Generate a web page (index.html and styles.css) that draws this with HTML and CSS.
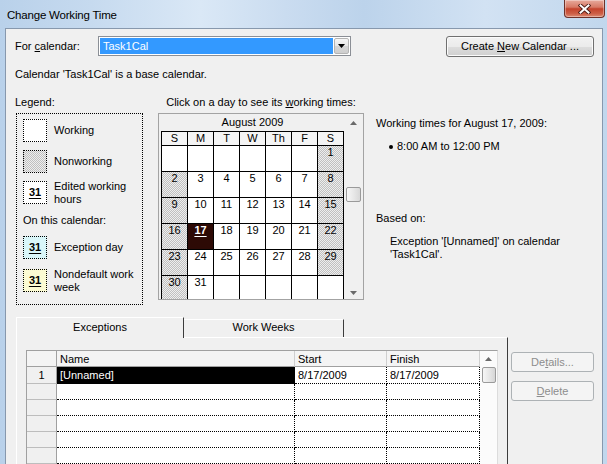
FILE: index.html
```html
<!DOCTYPE html>
<html>
<head>
<meta charset="utf-8">
<title>Change Working Time</title>
<link rel="stylesheet" href="styles.css">
</head>
<body>
<div class="window">
  <div class="titlebar">
    <span class="title">Change Working Time</span>
    <div class="close">
      <svg width="13" height="10" viewBox="0 0 13 10"><path d="M2.5 1.5 L10.5 8.5 M10.5 1.5 L2.5 8.5" stroke="#4a1a14" stroke-width="3.8" stroke-linecap="square"/><path d="M2.5 1.5 L10.5 8.5 M10.5 1.5 L2.5 8.5" stroke="#ffffff" stroke-width="2" stroke-linecap="square"/></svg>
    </div>
  </div>
  <div class="client">
    <div class="row-cal">
      <span class="lbl-for">For <u>c</u>alendar:</span>
      <div class="combo">
        <span class="combo-sel">Task1Cal</span>
        <span class="combo-btn"><svg width="7" height="4" viewBox="0 0 7 4"><polygon points="0,0 7,0 3.5,4" fill="#000"/></svg></span>
      </div>
      <button class="btn btn-new">Create <u>N</u>ew Calendar ...</button>
    </div>
    <p class="base-note">Calendar 'Task1Cal' is a base calendar.</p>

    <div class="main">
      <div class="legend-col">
        <div class="legend-title">Legend:</div>
        <div class="legend-box">
          <div class="lg-item"><span class="sw"></span><span class="lg-text">Working</span></div>
          <div class="lg-item"><span class="sw hatch"></span><span class="lg-text">Nonworking</span></div>
          <div class="lg-item"><span class="sw"><b>31</b></span><span class="lg-text">Edited working<br>hours</span></div>
          <div class="lg-sub">On this calendar:</div>
          <div class="lg-item lg-first"><span class="sw sw-exc"><b>31</b></span><span class="lg-text">Exception day</span></div>
          <div class="lg-item lg-last"><span class="sw sw-week"><b>31</b></span><span class="lg-text">Nondefault work<br>week</span></div>
        </div>
      </div>

      <div class="cal-col">
        <div class="cal-title">Click on a day to see its <u>w</u>orking times:</div>
        <div class="cal-box">
          <div class="cal-area">
            <div class="month">August 2009</div>
            <div class="days">
              <div class="dh">S</div><div class="dh">M</div><div class="dh">T</div><div class="dh">W</div><div class="dh">Th</div><div class="dh">F</div><div class="dh">S</div>
              <div class="d"></div><div class="d"></div><div class="d"></div><div class="d"></div><div class="d"></div><div class="d"></div><div class="d hatch">1</div>
              <div class="d hatch">2</div><div class="d">3</div><div class="d">4</div><div class="d">5</div><div class="d">6</div><div class="d">7</div><div class="d hatch">8</div>
              <div class="d hatch">9</div><div class="d">10</div><div class="d">11</div><div class="d">12</div><div class="d">13</div><div class="d">14</div><div class="d hatch">15</div>
              <div class="d hatch">16</div><div class="d d-sel">17</div><div class="d">18</div><div class="d">19</div><div class="d">20</div><div class="d">21</div><div class="d hatch">22</div>
              <div class="d hatch">23</div><div class="d">24</div><div class="d">25</div><div class="d">26</div><div class="d">27</div><div class="d">28</div><div class="d hatch">29</div>
              <div class="d hatch">30</div><div class="d">31</div><div class="d"></div><div class="d"></div><div class="d"></div><div class="d"></div><div class="d"></div>
            </div>
          </div>
          <div class="vscroll">
            <div class="arr arr-up"><svg width="7" height="4" viewBox="0 0 7 4"><polygon points="0,4 7,4 3.5,0" fill="#6a6a6a"/></svg></div>
            <div class="track"><div class="thumb"></div></div>
            <div class="arr arr-down"><svg width="7" height="4" viewBox="0 0 7 4"><polygon points="0,0 7,0 3.5,4" fill="#6a6a6a"/></svg></div>
          </div>
        </div>
      </div>

      <div class="info-col">
        <div>Working times for August 17, 2009:</div>
        <div class="bullet-line"><span class="dot"></span>8:00 AM to 12:00 PM</div>
        <div class="based">Based on:</div>
        <div class="based-text">Exception '[Unnamed]' on calendar<br>'Task1Cal'.</div>
      </div>
    </div>

    <div class="bottom">
      <div class="tabs-wrap">
        <div class="tabstrip">
          <div class="tab tab-active">Exceptions</div>
          <div class="tab tab-inactive">Work Weeks</div>
        </div>
        <div class="tabpanel">
          <div class="xgrid">
            <div class="hc hc-corner"></div>
            <div class="hc">Name</div>
            <div class="hc">Start</div>
            <div class="hc">Finish</div>
            <div class="gscroll">
              <div class="garr"><svg width="7" height="4" viewBox="0 0 7 4"><polygon points="0,4 7,4 3.5,0" fill="#6a6a6a"/></svg></div>
              <div class="gthumb"></div>
            </div>

            <div class="rh r1">1</div><div class="c r1 c-sel">[Unnamed]</div><div class="c r1">8/17/2009</div><div class="c r1">8/17/2009</div>
            <div class="rh"></div><div class="c"></div><div class="c"></div><div class="c"></div>
            <div class="rh"></div><div class="c"></div><div class="c"></div><div class="c"></div>
            <div class="rh"></div><div class="c"></div><div class="c"></div><div class="c"></div>
            <div class="rh"></div><div class="c"></div><div class="c"></div><div class="c"></div>
            <div class="rh"></div><div class="c"></div><div class="c"></div><div class="c"></div>
            <div class="rh"></div><div class="c"></div><div class="c"></div><div class="c"></div>
          </div>
        </div>
      </div>
      <div class="side-btns">
        <button class="btn btn-dis">De<u>t</u>ails...</button>
        <button class="btn btn-dis btn-del"><u>D</u>elete</button>
      </div>
    </div>
  </div>
</div>
</body>
</html>
```
FILE: styles.css
```css
* { box-sizing: border-box; }
html, body { margin: 0; padding: 0; }
body {
  width: 607px;
  height: 464px;
  overflow: hidden;
  font-family: "Liberation Sans", Arial, sans-serif;
  font-size: 11px;
  line-height: 13px;
  color: #000;
  background: #c6daef;
}
u { text-decoration: underline; text-underline-offset: 1px; }

.window {
  width: 607px;
  height: 464px;
  display: flex;
  flex-direction: column;
  background: linear-gradient(90deg, #b9d1ea 0%, #c6daef 15%, #dae8f6 33%, #cadcf0 47%, #bcd3eb 60%, #d2e2f3 80%, #c1d7ed 100%);
}

.titlebar {
  height: 28px;
  flex: none;
  display: flex;
  align-items: flex-start;
  padding: 0 2px 0 7px;
}
.title {
  margin-top: 8px;
  font-size: 11.5px;
  line-height: 14px;
  letter-spacing: -0.2px;
  color: #000;
}
.close {
  margin-left: auto;
  width: 41px;
  height: 18px;
  border: 1px solid #6e3129;
  border-top: none;
  border-radius: 0 0 4px 4px;
  background: linear-gradient(180deg, #e7aa9c 0%, #d77a66 42%, #c4432c 52%, #cd5f47 80%, #dc8a73 100%);
  box-shadow: inset 0 0 0 1px rgba(255, 255, 255, 0.35);
  display: flex;
  align-items: center;
  justify-content: center;
}

.client {
  flex: 1;
  min-height: 0;
  overflow: hidden;
  margin: 0 4px 0 5px;
  border: 1px solid #8798ad;
  border-bottom: none;
  background: #f0f0f0;
  padding: 7px 8px 0 9px;
  display: flex;
  flex-direction: column;
}

/* top row */
.row-cal {
  display: flex;
  align-items: flex-start;
  height: 20px;
  flex: none;
}
.lbl-for {
  width: 83px;
  line-height: 20px;
}
.combo {
  width: 253px;
  height: 20px;
  border: 1px solid #8b8f96;
  background: #fff;
  padding: 1px;
  display: flex;
}
.combo-sel {
  flex: 1;
  background: #3399ff;
  color: #fff;
  padding-left: 3px;
  line-height: 16px;
}
.combo-btn {
  width: 15px;
  margin-left: 1px;
  border: 1px solid #b4b4b4;
  border-radius: 2px;
  background: linear-gradient(180deg, #f6f6f6 0%, #e6e6e6 50%, #d6d6d6 51%, #cfcfcf 100%);
  display: flex;
  align-items: center;
  justify-content: center;
}
.btn {
  font-family: "Liberation Sans", Arial, sans-serif;
  font-size: 11px;
  line-height: 13px;
  color: #000;
  padding: 0;
  margin: 0;
  border: 1px solid #707070;
  border-radius: 3px;
  background: linear-gradient(180deg, #f2f2f2 0%, #ebebeb 50%, #dddddd 51%, #cfcfcf 100%);
  box-shadow: inset 0 0 0 1px #fbfbfb;
}
.btn-new {
  margin-left: auto;
  width: 148px;
  height: 21px;
}

.base-note {
  margin: 12px 0 0;
  flex: none;
}

/* main */
.main {
  display: flex;
  align-items: flex-start;
  margin-top: 15px;
  flex: none;
}
.legend-col { width: 128px; }
.legend-box {
  margin: 4px 0 0 1px;
  width: 127px;
  height: 192px;
  border: 1px dotted #000;
  padding: 5px 6px 0 6px;
}
.lg-item {
  display: flex;
  align-items: center;
  height: 23px;
}
.lg-item + .lg-item { margin-top: 8px; }
.lg-item.lg-last { margin-top: 10px; }
.lg-text { margin-left: 7px; }
.sw {
  width: 24px;
  height: 23px;
  flex: none;
  border: 1px dotted #000;
  background: #fff;
  display: flex;
  align-items: center;
  justify-content: center;
}
.sw b { text-decoration: underline; text-underline-offset: 2px; }
.sw-exc { background: #d9f6f9; }
.sw-week { background: #fbfbd3; }
.lg-sub { margin: 10px 0 9px; }

.hatch {
  background: repeating-conic-gradient(#c0c0c0 0 25%, #eeeeee 0 50%) 0 0 / 2px 2px;
}

/* calendar */
.cal-col {
  margin-left: 15px;
  width: 206px;
  flex: none;
}
.cal-title { text-align: center; }
.cal-box {
  margin-top: 4px;
  height: 187px;
  border: 1px solid #a3a3a3;
  background: #f0f0f0;
  padding: 0 1px 0 2px;
  display: flex;
  overflow: hidden;
}
.cal-area { width: 183px; flex: none; }
.month {
  height: 17px;
  line-height: 17px;
  text-align: center;
}
.days {
  display: grid;
  grid-template-columns: repeat(7, 25px);
  grid-template-rows: 13px;
  grid-auto-rows: 25px;
  gap: 1px;
  padding: 1px;
  background: #000;
}
.dh {
  background: #f4f4f4;
  text-align: center;
  line-height: 13px;
}
.d {
  background: #fff;
  text-align: center;
  line-height: 13px;
}
.d.hatch {
  background: repeating-conic-gradient(#c0c0c0 0 25%, #eeeeee 0 50%) 0 0 / 2px 2px;
}
.d-sel {
  background: #2d0a05;
  color: #fff;
  font-weight: bold;
  text-decoration: underline;
  text-underline-offset: 2px;
}
.vscroll {
  width: 17px;
  margin-left: 1px;
  flex: none;
  display: flex;
  flex-direction: column;
}
.arr {
  display: flex;
  align-items: center;
  justify-content: center;
  flex: none;
}
.arr-up { height: 17px; }
.arr-down { height: 12px; }
.track { flex: 1; }
.thumb {
  margin: 56px 0 0 1px;
  width: 15px;
  height: 15px;
  border: 1px solid #9a9a9a;
  border-radius: 2px;
  background: linear-gradient(90deg, #f6f6f6 0%, #e8e8e8 50%, #d8d8d8 100%);
}

/* info */
.info-col {
  margin-left: 12px;
  padding-top: 21px;
  flex: 1;
}
.bullet-line {
  margin-top: 10px;
  display: flex;
  align-items: center;
}
.dot {
  width: 4px;
  height: 4px;
  border-radius: 50%;
  background: #000;
  margin: 1px 4px 0 13px;
}
.based { margin-top: 59px; }
.based-text {
  margin-top: 10px;
  padding-left: 14px;
}

/* bottom */
.bottom {
  display: flex;
  align-items: flex-start;
  margin-top: 12px;
  flex: 1;
  min-height: 0;
}
.tabs-wrap {
  margin-left: 1px;
  width: 492px;
  flex: none;
  display: flex;
  flex-direction: column;
  height: 200px;
}
.tabstrip {
  display: flex;
  align-items: flex-start;
  height: 20px;
  flex: none;
}
.tab {
  text-align: center;
  background: #f0f0f0;
  border-top: 1px solid #ffffff;
  border-right: 1px solid #3c3c3c;
}
.tab-active {
  position: relative;
  z-index: 1;
  width: 168px;
  height: 21px;
  border-left: 1px solid #ffffff;
  padding-top: 3px;
}
.tab-inactive {
  width: 160px;
  height: 18px;
  margin-top: 2px;
  padding-top: 1px;
}
.tabpanel {
  flex: 1;
  border-top: 1px solid #ffffff;
  border-left: 1px solid #ffffff;
  border-right: 1px solid #3c3c3c;
  padding: 12px 0 0 9px;
}

.xgrid {
  display: grid;
  grid-template-columns: 30px 238px 92px 93px 17px;
  grid-template-rows: 16px 17px;
  grid-auto-rows: 16px;
  width: 472px;
  border: 1px solid #a0a0a0;
  border-right-color: #dcdcdc;
  border-bottom: none;
  background: #fff;
}
.hc {
  background: #f4f4f4;
  border-right: 1px solid #cfcfcf;
  border-bottom: 1px solid #a0a0a0;
  padding: 1px 0 0 3px;
  line-height: 14px;
}
.hc-corner { border-right: 1px solid #a0a0a0; }
.gscroll {
  grid-column: 5;
  grid-row: 1 / span 8;
  background: #fbfbfb;
  display: flex;
  flex-direction: column;
  align-items: center;
}
.garr {
  height: 16px;
  display: flex;
  align-items: center;
  justify-content: center;
  flex: none;
}
.gthumb {
  width: 14px;
  height: 16px;
  border: 1px solid #9a9a9a;
  border-radius: 2px;
  background: linear-gradient(90deg, #f6f6f6 0%, #e8e8e8 50%, #d6d6d6 100%);
}
.rh {
  background: #f0f0f0;
  border-right: 1px solid #a0a0a0;
  border-bottom: 1px solid #bdbdbd;
  text-align: center;
  line-height: 15px;
}
.c {
  background: #fff;
  border-right: 1px dotted #000;
  border-bottom: 1px dotted #000;
  padding-left: 3px;
  line-height: 15px;
  white-space: nowrap;
}
.r1 { line-height: 16px; }
.c-sel {
  background: #000;
  color: #fff;
}

.side-btns {
  margin-left: 3px;
  width: 83px;
  padding-top: 35px;
  display: flex;
  flex-direction: column;
}
.btn-dis {
  height: 20px;
  color: #8d8d8d;
  border: 1px solid #adb2b5;
  background: #f4f4f4;
  box-shadow: none;
}
.btn-del { margin-top: 9px; }
```
